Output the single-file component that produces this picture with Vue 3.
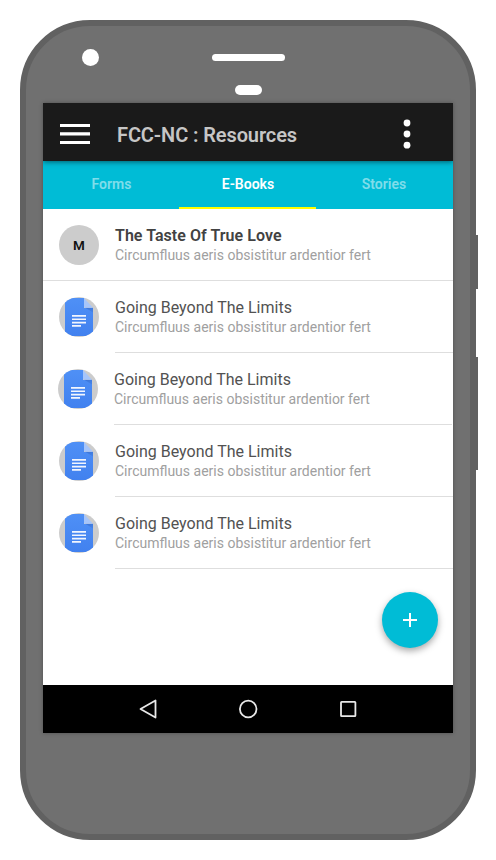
<script setup>
const tabs = [
  { label: 'Forms', active: false },
  { label: 'E-Books', active: true },
  { label: 'Stories', active: false },
]

const subtitle = 'Circumfluus aeris obsistitur ardentior fert'
const books = [
  { title: 'The Taste Of True Love', initial: 'M' },
  { title: 'Going Beyond The Limits' },
  { title: 'Going Beyond The Limits', shifted: true },
  { title: 'Going Beyond The Limits' },
  { title: 'Going Beyond The Limits' },
]
</script>

<template>
  <div class="stage">
    <div class="phone">
      <span class="side-key power"></span>
      <span class="side-key volume"></span>
      <div class="hardware">
        <span class="camera"></span>
        <span class="speaker"></span>
        <span class="sensor"></span>
      </div>

      <div class="screen">
        <header class="app-bar">
          <svg class="menu" width="30" height="20" viewBox="0 0 30 20">
            <path d="M0 0h30v3H0zM0 8.3h30v3.2H0zM0 16.900h30v3.1H0z" fill="#fff" />
          </svg>
          <h1>FCC-NC : Resources</h1>
          <svg class="more" width="8" height="30" viewBox="0 0 8 30">
            <circle cx="4" cy="4" r="3.4" />
            <circle cx="4" cy="15" r="3.4" />
            <circle cx="4" cy="26.2" r="3.4" />
          </svg>
        </header>

        <nav class="tabs">
          <div v-for="tab in tabs" :key="tab.label" class="tab" :class="{ active: tab.active }">
            <span>{{ tab.label }}</span>
          </div>
        </nav>

        <main class="list">
          <div
            v-for="(book, i) in books"
            :key="i"
            class="row"
            :class="{ featured: book.initial, shifted: book.shifted }"
          >
            <div class="avatar">
              <span v-if="book.initial">{{ book.initial }}</span>
              <svg v-else width="40" height="40" viewBox="0 0 40 40">
                <defs>
                  <linearGradient :id="`paper${i}`" x1="0" y1="0" x2="0" y2="1">
                    <stop offset="0" stop-color="#4f90f6" />
                    <stop offset="1" stop-color="#4181ef" />
                  </linearGradient>
                  <linearGradient :id="`shade${i}`" x1="0" y1="0" x2="1" y2="1">
                    <stop offset="0" stop-color="#2f62bd" stop-opacity="0.6" />
                    <stop offset="0.8" stop-color="#2f62bd" stop-opacity="0.25" />
                  </linearGradient>
                  <clipPath :id="`round${i}`"><circle cx="20" cy="20" r="20" /></clipPath>
                </defs>
                <g :clip-path="`url(#round${i})`">
                  <path d="M8 1h17v10h9v26q0 2-2 2H8q-2 0-2-2V3q0-2 2-2z" :fill="`url(#paper${i})`" />
                  <path d="M26 10.500H34v5z" :fill="`url(#shade${i})`" />
                  <path d="M25 1l9 9.800h-7.500q-1.500 0-1.500-1.500z" fill="#a6c5fa" />
                  <path
                    d="M13 18h14v1.700H13zM13 21.400h14v1.700H13zM13 24.800h14v1.700H13zM13 28h9v1.700h-9z"
                    fill="#f2f6fe"
                  />
                </g>
              </svg>
            </div>
            <div class="text">
              <div class="title">{{ book.title }}</div>
              <div class="subtitle">{{ subtitle }}</div>
            </div>
          </div>
          <button class="fab" aria-label="Add">
            <svg width="14" height="14" viewBox="0 0 14 14">
              <path d="M6 0h2v6h6v2H8v6H6V8H0V6h6z" fill="#fff" />
            </svg>
          </button>
        </main>

        <footer class="nav-bar">
          <svg width="20" height="20" viewBox="0 0 20 20">
            <path d="M17.500 1.500v17L2.500 10z" />
          </svg>
          <svg width="20" height="20" viewBox="0 0 20 20">
            <circle cx="10.200" cy="10" r="8.300" />
          </svg>
          <svg width="20" height="20" viewBox="0 0 20 20">
            <rect x="3" y="2.800" width="14.400" height="14.400" rx="0.600" />
          </svg>
        </footer>
      </div>
    </div>
  </div>
</template>

<style>
body {
  background: #fff;
}
</style>

<style scoped>
.stage {
  box-sizing: border-box;
  width: 496px;
  height: 860px;
  padding: 20px;
  font-family: Roboto, "Liberation Sans", sans-serif;
}
.phone {
  position: relative;
  box-sizing: border-box;
  width: 456px;
  height: 820px;
  padding: 0 17px;
  background: #707070;
  border: 6px solid #616161;
  border-radius: 70px;
}
.side-key {
  position: absolute;
  right: -8px;
  width: 2px;
  background: #616161;
}
.power {
  top: 209px;
  height: 54px;
}
.volume {
  top: 331px;
  height: 113px;
}
.hardware {
  display: grid;
  grid-template-columns: 39px 1fr 39px;
  grid-template-rows: 59px 18px;
  height: 77px;
}
.hardware span {
  background: #fff;
}
.camera {
  width: 17px;
  height: 17px;
  margin-top: 23px;
  justify-self: end;
  transform: translateX(17px);
  border-radius: 50%;
}
.speaker {
  grid-column: 2;
  width: 73px;
  height: 7px;
  margin-top: 28px;
  justify-self: center;
  border-radius: 4px;
}
.sensor {
  grid-column: 2;
  width: 27px;
  height: 10px;
  justify-self: center;
  border-radius: 5px;
}
.screen {
  display: flex;
  flex-direction: column;
  width: 410px;
  height: 630px;
  background: #fff;
  box-shadow: 0 0 4px rgba(0, 0, 0, 0.3);
}
.app-bar {
  position: relative;
  z-index: 1;
  display: flex;
  flex: none;
  align-items: center;
  box-sizing: border-box;
  height: 58px;
  padding: 4px 42px 0 17px;
  background: #1a1a1a;
  box-shadow: 0 1px 5px rgba(0, 0, 0, 0.5);
  clip-path: inset(0 0 -10px 0);
}
.app-bar h1 {
  flex: 1;
  margin: 2px 0 0 27px;
  color: #c6c6c6;
  font-size: 20px;
  line-height: 24px;
  font-weight: 600;
  letter-spacing: -0.1px;
}
.more {
  fill: #fff;
}
.tabs {
  display: grid;
  grid-template-columns: 136px 137px 137px;
  flex: none;
  height: 48px;
  background: #00bcd6;
}
.tab {
  display: flex;
  align-items: center;
  justify-content: center;
  box-sizing: border-box;
  border-bottom: 2px solid transparent;
  padding-left: 1px;
  color: rgba(255, 255, 255, 0.5);
  font-size: 14px;
  font-weight: 600;
}
.tab:last-child {
  padding: 0 1px 0 0;
}
.tab.active {
  border-color: #ff0;
  color: #fff;
}
.list {
  position: relative;
  flex: 1;
}
.row {
  display: flex;
  gap: 16px;
  height: 72px;
  padding-left: 16px;
}
.shifted {
  margin-left: -1px;
  margin-right: 1px;
}
.avatar {
  display: flex;
  align-items: center;
  justify-content: center;
  flex: none;
  width: 40px;
  height: 40px;
  margin-top: 16px;
  border-radius: 50%;
  background: #ccc;
  color: #111;
  font-size: 13.500px;
  font-weight: 600;
}
.text {
  flex: 1;
  box-sizing: border-box;
  padding-top: 17px;
  border-bottom: 1px solid #dedede;
}
.featured {
  box-sizing: border-box;
  border-bottom: 1px solid #dedede;
}
.featured .text {
  border-bottom: 0;
}
.title {
  color: #525252;
  font-size: 16px;
  line-height: 20px;
}
.featured .title {
  color: #424242;
  font-weight: 600;
  letter-spacing: 0.050px;
}
.subtitle {
  margin-top: -1px;
  color: #a0a0a0;
  font-size: 14px;
  line-height: 20px;
}
.fab {
  position: absolute;
  right: 15px;
  bottom: 37px;
  display: flex;
  align-items: center;
  justify-content: center;
  width: 56px;
  height: 56px;
  padding: 0;
  border: 0;
  border-radius: 50%;
  background: #00bcd6;
  box-shadow: 0 3px 7px rgba(0, 0, 0, 0.35);
}
.nav-bar {
  display: flex;
  align-items: center;
  justify-content: center;
  gap: 80px;
  flex: none;
  height: 48px;
  background: #000;
}
.nav-bar svg {
  fill: none;
  stroke: #e8e8e8;
  stroke-width: 1.8;
  stroke-linejoin: round;
}
</style>
